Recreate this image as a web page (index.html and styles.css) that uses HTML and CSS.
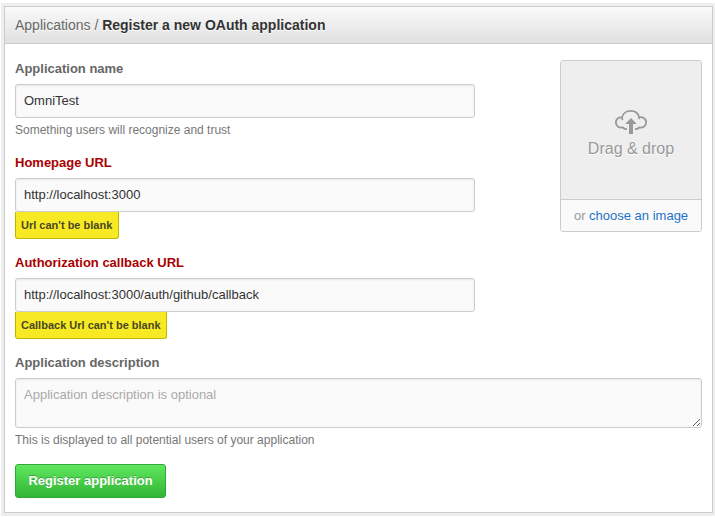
FILE: index.html
```html
<!DOCTYPE html>
<html lang="en">
<head>
<meta charset="utf-8">
<title>Register a new OAuth application</title>
<link rel="stylesheet" href="styles.css">
</head>
<body>
<main class="box">
  <header class="box-header"><span class="crumb">Applications / </span><strong class="title">Register a new OAuth application</strong></header>
  <form class="box-body">
    <div class="top">
      <div class="fields">
        <div class="field field-name">
          <label class="label" for="name">Application name</label>
          <input class="input" id="name" type="text" value="OmniTest" spellcheck="false">
          <p class="note">Something users will recognize and trust</p>
        </div>
        <div class="field">
          <label class="label invalid" for="url">Homepage URL</label>
          <input class="input" id="url" type="text" value="http://localhost:3000" spellcheck="false">
          <p class="error">Url can't be blank</p>
        </div>
        <div class="field">
          <label class="label invalid" for="callback">Authorization callback URL</label>
          <input class="input" id="callback" type="text" value="http://localhost:3000/auth/github/callback" spellcheck="false">
          <p class="error">Callback Url can't be blank</p>
        </div>
      </div>
      <div class="uploader">
        <div class="dropzone">
          <svg class="cloud" width="34" height="26" viewBox="0 0 34 26">
            <path d="M13 20C11.500 20.300 9.800 19.700 8.800 18.400C4.800 19.200 1.900 17 1.900 13.400C1.900 10 4.600 7.900 8 8.400C8.800 4.400 12.400 1.900 16.800 1.900C21 1.900 24.300 4.500 25.100 8.200C29.200 7.700 32.100 10 32.100 13.400C32.100 17 29.200 19.100 25.300 18.400C24.300 19.700 22.600 20.300 21 20M8 8.400C7.900 9.500 8.200 10.300 8.700 11M25.100 8.200C25.200 8.900 25 9.500 24.700 10" fill="none" stroke="#999" stroke-width="1.8"/>
            <path d="M17 9L22.800 15H19V25H15V15H11.200Z" fill="#999"/>
          </svg>
          <span class="drop-text">Drag &amp; drop</span>
        </div>
        <div class="choose">or <a class="link" href="#">choose an image</a></div>
      </div>
    </div>
    <div class="field field-desc">
      <label class="label" for="desc">Application description</label>
      <textarea class="input textarea" id="desc" placeholder="Application description is optional"></textarea>
      <p class="note">This is displayed to all potential users of your application</p>
    </div>
    <button class="button" type="button">Register application</button>
  </form>
</main>
</body>
</html>
```
FILE: styles.css
```css
* { box-sizing: border-box; }
body {
  margin: 0;
  padding: 6px 2px 4px 4px;
  background: #fff;
  font: 13px/18px "Liberation Sans", Arial, sans-serif;
  color: #333;
  overflow: hidden;
}
.box {
  height: 507px;
  border: 1px solid #ccc;
  background: #fff;
  box-shadow: 0 0 0 3px #eee;
}
.box-header {
  height: 37px;
  padding-left: 10px;
  border-bottom: 1px solid #ccc;
  background: linear-gradient(#fafafa, #e0e0e0);
  font-size: 14px;
  line-height: 36px;
  text-shadow: 0 1px 0 #fff;
  white-space: pre;
}
.crumb { color: #666; }
.title { color: #333; }
.box-body { padding: 16px 10px 0; }
.top { display: flex; justify-content: space-between; }
.fields { width: 460px; }
.field { height: 100px; }
.field-name { height: 94px; }
.field-desc { height: 110px; }
.label {
  display: block;
  width: max-content;
  margin-bottom: 6px;
  color: #666;
  font-weight: bold;
}
.invalid { color: #a00; }
.input {
  display: block;
  width: 100%;
  height: 34px;
  margin: 0;
  padding: 0 8px 2px;
  border: 1px solid #ccc;
  border-radius: 3px;
  background: #fafafa;
  box-shadow: inset 0 1px 2px rgba(0, 0, 0, .075);
  outline: none;
  color: #333;
  font: 13px/18px "Liberation Sans", Arial, sans-serif;
}
.textarea { height: 50px; padding: 7px 8px; resize: both; }
.textarea::placeholder { color: #a9a9a9; }
.note {
  width: max-content;
  margin: 3px 0 0;
  color: #777;
  font-size: 12px;
  line-height: 18px;
}
.error {
  width: max-content;
  height: 27px;
  margin: 0;
  padding: 0 5.500px 0 5px;
  border: 1px solid #c2b700;
  border-top: 0;
  border-radius: 0 0 3px 3px;
  background: #f7ea24;
  color: #494620;
  font-size: 11px;
  font-weight: bold;
  line-height: 26px;
}
.uploader {
  width: 142px;
  height: 172px;
  border: 1px solid #ccc;
  border-radius: 3px;
  overflow: hidden;
}
.dropzone {
  display: flex;
  flex-direction: column;
  align-items: center;
  height: 139px;
  padding-top: 48px;
  border-bottom: 1px solid #ccc;
  background: #eee;
  color: #999;
  font-size: 16px;
  line-height: 24px;
  text-shadow: 0 1px 0 #fff;
}
.cloud { display: block; margin-bottom: 2px; }
.choose {
  height: 31px;
  background: #fafafa;
  color: #999;
  font-size: 13px;
  line-height: 31px;
  text-align: center;
}
.link { color: #1f73c6; text-decoration: none; }
.button {
  display: block;
  width: 151px;
  height: 34px;
  padding: 0;
  border: 1px solid #2fa838;
  border-radius: 3px;
  background: linear-gradient(#60e75f, #31b534);
  color: #fff;
  font: bold 13px/32px "Liberation Sans", Arial, sans-serif;
  text-shadow: 0 -1px 0 rgba(0, 0, 0, .25);
}
```
